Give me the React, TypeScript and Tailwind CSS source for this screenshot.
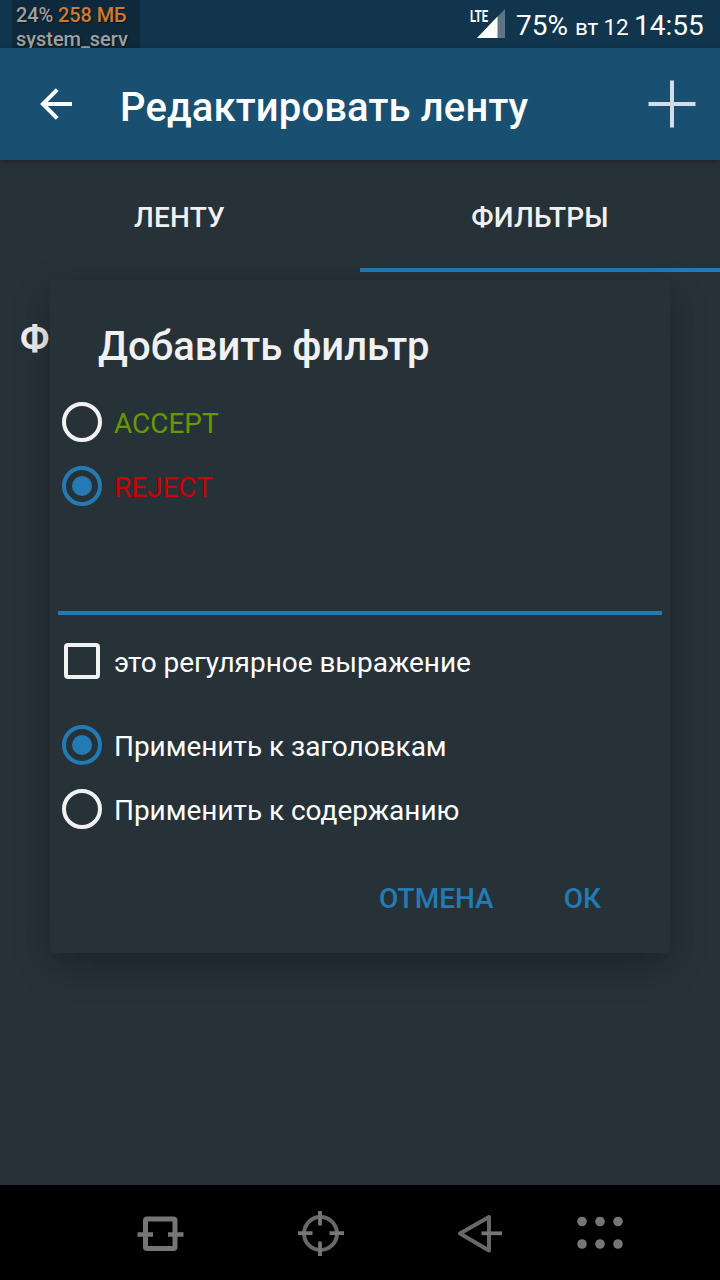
import React from "react";

function Radio({ checked = false }: { checked?: boolean }) {
  return (
    <span
      className={`flex size-10 shrink-0 items-center justify-center rounded-full border-4 ${
        checked ? "border-[#247ab3]" : "border-[#f1f1f1]"
      }`}
    >
      {checked && <span className="size-5 rounded-full bg-[#247ab3]" />}
    </span>
  );
}

function RadioRow({ label, checked, color = "text-white" }: { label: string; checked?: boolean; color?: string }) {
  return (
    <label className="flex h-16 items-center gap-3 pl-3">
      <Radio checked={checked} />
      <span className={`pt-1 tracking-[-0.04px] whitespace-nowrap ${color}`}>{label}</span>
    </label>
  );
}

function StatusBar() {
  return (
    <div className="flex h-12 justify-between overflow-hidden bg-[#11354c] pl-3 pr-4 text-white">
      <div className="h-12 w-32 overflow-hidden bg-[#0d293b] pl-1 pt-[3px] text-[20px] leading-6 font-medium tracking-[-0.04px] whitespace-nowrap text-[#a0a0a0] [text-shadow:1px_1px_1px_#0008]">
        <div className="tracking-[-0.1px]">
          24% <span className="text-[#cf7a30]">258 МБ</span>
        </div>
        <div className="h-[21px]">system_serv</div>
      </div>
      <div className="flex h-12 items-baseline pt-[10px] text-[28px] leading-8 whitespace-nowrap">
        <svg width="36" height="30" viewBox="0 0 36 30" className="mr-[10px] -mt-px self-start overflow-visible">
          <path d="M35 0v29H7z" fill="#5c7485" />
          <path d="M27.5 7.500v21.500H7z" fill="#fff" />
          <text x="0" y="13" fill="#fff" fontSize="16" fontWeight="700" fontFamily="Roboto, sans-serif" textLength="18" lengthAdjust="spacingAndGlyphs">
            LTE
          </text>
        </svg>
        <span className="w-[59px]">75%</span>
        <span className="w-[59px] text-[22.500px] tracking-[-0.2px]">вт 12</span>
        <span className="w-[70px]">14:55</span>
      </div>
    </div>
  );
}

function NavBar() {
  return (
    <div className="flex h-[95px] items-center bg-black pl-20 text-[#767676]">
      <svg className="w-40" height="96" viewBox="0 0 160 96" fill="none" stroke="currentColor">
        <rect x="65.5" y="34" width="29.5" height="29.5" rx="1.5" strokeWidth="5" />
        <path d="M57.5 49.5H73M88 49.5h15.5" strokeWidth="4.5" />
      </svg>
      <svg className="w-40" height="96" viewBox="0 0 160 96" fill="none" stroke="currentColor">
        <circle cx="80.500" cy="48.5" r="16.5" stroke="#686868" strokeWidth="4" />
        <path d="M58 48.200h14.500M89.500 48.200h14.500M80 26v14.500M80 56.500v14.500" strokeWidth="3.800" />
      </svg>
      <svg className="w-40" height="96" viewBox="0 0 160 96" fill="none" stroke="currentColor">
        <path d="M60 48.500L89 32v33.500z" stroke="#686868" strokeWidth="4" strokeLinejoin="round" />
        <path d="M81.500 48.300H102" strokeWidth="3.800" />
      </svg>
      <svg className="w-20" height="96" viewBox="0 0 80 96" fill="currentColor">
        {[22, 40, 58].map((x) => (
          <g key={x}>
            <circle cx={x} cy="36.500" r="4.800" />
            <circle cx={x} cy="59" r="4.800" />
          </g>
        ))}
      </svg>
    </div>
  );
}

function FilterDialog() {
  return (
    <div className="absolute top-[280px] left-[50px] flex h-[673px] w-[620px] flex-col rounded-[4px] bg-[#273238] pt-[43px] text-[28px] leading-8 shadow-[0_12px_36px_rgba(0,0,0,0.3)]">
      <h2 className="pl-12 text-[40px] leading-[48px] font-medium whitespace-nowrap text-[#f1f1f1]">Добавить фильтр</h2>
      <div className="mt-[19px]">
        <RadioRow label="ACCEPT" color="text-[#669900]" />
        <RadioRow label="REJECT" checked color="text-[#cc0000]" />
      </div>
      <div className="mx-2 h-[97px] border-b-4 border-[#247ab3]" />
      <label className="mt-[14px] flex h-16 items-center gap-[14px] pl-[14px] text-white">
        <span className="size-9 shrink-0 rounded-[4px] border-4 border-[#f1f1f1]" />
        <span className="pt-1 tracking-[-0.04px] whitespace-nowrap">это регулярное выражение</span>
      </label>
      <div className="mt-5">
        <RadioRow label="Применить к заголовкам" checked />
        <RadioRow label="Применить к содержанию" />
      </div>
      <div className="mt-[42px] flex justify-end gap-[70px] pr-[69px] font-medium text-[#247ab3]">
        <button className="whitespace-nowrap">ОТМЕНА</button>
        <button>ОК</button>
      </div>
    </div>
  );
}

export default function App() {
  return (
    <div className="relative flex h-[1280px] w-[720px] flex-col overflow-hidden bg-[#273238] [font-family:Roboto,sans-serif]">
      <StatusBar />
      <header className="z-10 flex h-28 items-center bg-[#195072] pr-6 pl-10 text-white shadow-[0_2px_6px_rgba(0,0,0,0.3)]">
        <svg width="33" height="32" viewBox="0 0 33 32" fill="none" stroke="currentColor" strokeWidth="4">
          <path d="M32 16H4M17.200 1.700L2.900 16l14.300 14.300" />
        </svg>
        <h1 className="ml-[47px] flex-1 pt-[7px] text-[40px] leading-[48px] font-medium tracking-[0.14px] whitespace-nowrap">Редактировать ленту</h1>
        <svg width="48" height="48" viewBox="0 0 48 48" stroke="#d1dce3" strokeWidth="4">
          <path d="M0.500 24H47.500M24 0.500V47.500" />
        </svg>
      </header>
      <nav className="grid h-28 grid-cols-2 text-center text-[28px] leading-8 font-medium tracking-[0.2px] text-[#f1f1f1]">
        <div className="pt-[42px] pr-px">ЛЕНТУ</div>
        <div className="border-b-4 border-[#247ab3] pt-[42px]">ФИЛЬТРЫ</div>
      </nav>
      <main className="flex-1 pt-[43px] pl-5 text-[36px] leading-[48px] font-bold text-[#f1f1f1]">Ф</main>
      <FilterDialog />
      <NavBar />
    </div>
  );
}
